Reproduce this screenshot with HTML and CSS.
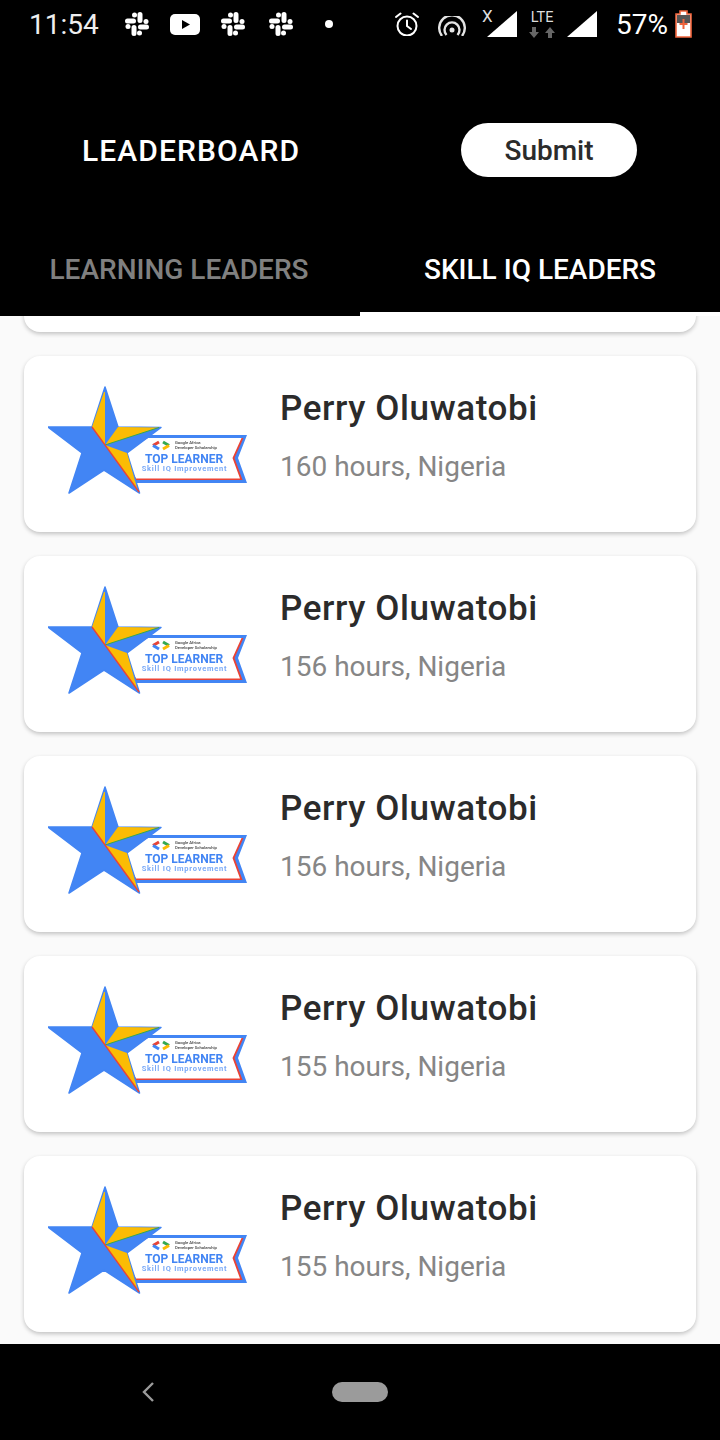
FILE: index.html
```html
<!DOCTYPE html>
<html lang="en">

<head>
    <meta charset="UTF-8">
    <meta name="viewport" content="width=device-width, initial-scale=1.0">
    <title>Leaderboard</title>
    <link rel="stylesheet" href="styles.css">
</head>

<body>

    <!-- Shared icons -->
    <svg class="icon-defs" width="0" height="0">
        <defs>
            <symbol id="slack" viewBox="0 0 24 24">
                <g fill="none" stroke="#fff" stroke-width="5" stroke-linecap="round">
                    <path d="M2.5 9H8.5M15 2.5V8.5M15.5 15H21.5M9 15.5V21.5"/>
                </g>
                <g fill="#fff">
                    <circle cx="9.5" cy="3" r="2.5"/>
                    <circle cx="21" cy="9.5" r="2.5"/>
                    <circle cx="14.5" cy="21" r="2.5"/>
                    <circle cx="3" cy="14.5" r="2.5"/>
                </g>
            </symbol>

            <symbol id="signal" viewBox="0 0 30 26">
                <path d="M0 26L30 0V26Z" fill="#fff"/>
            </symbol>

            <symbol id="badge" viewBox="0 0 200 108">
                <!-- ribbon, left end sits behind the star -->
                <path d="M100 49H199L190 72L199 97H88L75 67Z" fill="#4285f4"/>
                <path d="M100 52H195.500L186.500 72L194.500 94H88L75 67Z" fill="#ea4335"/>
                <path d="M100 52H193.500L184.500 72L192 92.500H88L75 67Z" fill="#fff"/>
                <!-- logo chevrons -->
                <g fill="none" stroke-width="3">
                    <path d="M111 56L105 59.500" stroke="#ea4335"/>
                    <path d="M105 59.500L111 63" stroke="#4285f4"/>
                    <path d="M115 56L121 59.500" stroke="#34a853"/>
                    <path d="M121 59.500L115 63" stroke="#fbbc04"/>
                </g>
                <text class="badge-small" x="127" y="57.500">Google Africa</text>
                <text class="badge-small" x="127" y="62.800">Developer Scholarship</text>
                <text class="badge-title" x="136" y="77">TOP LEARNER</text>
                <text class="badge-sub" x="136.500" y="84.500">Skill IQ Improvement</text>
                <!-- star -->
                <path d="M57 1L70 41L113 41.500L79 67L91.500 107L56 84L21 107L34 67L0 41L44 41Z" fill="#4285f4" stroke="#4285f4" stroke-width="1.500" stroke-linejoin="round"/>
                <path d="M56 6L44 41L57 59V6Z" fill="#fbbc04"/>
                <path d="M57 59L70 41L111 41.500Z" fill="#fbbc04"/>
                <path d="M57 59L79 67L90 105Z" fill="#fbbc04"/>
                <path d="M57 59L111 41.500" stroke="#34a853" stroke-width="1" fill="none"/>
                <path d="M44 41L57 59L91 106" stroke="#ea4335" stroke-width="1.300" fill="none"/>
            </symbol>
        </defs>
    </svg>

    <!-- Status Bar -->
    <div class="status-bar">
        <span class="clock">11:54</span>
        <svg class="slack first"><use href="#slack"/></svg>
        <svg class="youtube" viewBox="0 0 30 21">
            <rect width="30" height="21" rx="5" fill="#fff"/>
            <path d="M12 6L20 10.500L12 15Z" fill="#000"/>
        </svg>
        <svg class="slack"><use href="#slack"/></svg>
        <svg class="slack"><use href="#slack"/></svg>
        <span class="status-dot"></span>

        <div class="status-right">
            <svg class="alarm" viewBox="0 0 24 24" fill="none" stroke="#fff" stroke-width="2">
                <circle cx="12" cy="14" r="9.500"/>
                <path d="M12 8.500V14L16 17M1 5L5.500 1.500M23 5L18.500 1.500" stroke-linecap="round"/>
            </svg>
            <svg class="hotspot" viewBox="0 0 28 20" fill="none" stroke="#e4e4e4" stroke-width="2.400">
                <path d="M4 20A12.800 12.800 0 1 1 24 20"/>
                <path d="M8.500 19A7.500 7.500 0 1 1 19.500 19"/>
                <circle cx="14" cy="14" r="2.500" fill="#e4e4e4" stroke="none"/>
            </svg>
            <div class="signal-x">
                <span class="x-mark">X</span>
                <svg class="signal"><use href="#signal"/></svg>
            </div>
            <div class="lte">
                <span class="lte-text">LTE</span>
                <svg class="lte-arrows" viewBox="0 0 26 11" fill="#666">
                    <path d="M3 0H7V5H10L5 11L0 5H3Z"/>
                    <path d="M19 11H23V6H26L21 0L16 6H19Z"/>
                </svg>
            </div>
            <svg class="signal second"><use href="#signal"/></svg>
            <span class="battery-text">57%</span>
            <svg class="battery" viewBox="0 0 17 28">
                <path d="M5 1H12V4H16V27H1V4H5Z" fill="#fff" stroke="#f0643c" stroke-width="1.600"/>
                <path d="M2 5H15V13H2Z" fill="#555"/>
                <path d="M8.500 9V19M4.500 14H12.500" stroke="#f0643c" stroke-width="2"/>
            </svg>
        </div>
    </div>

    <!-- Header -->
    <header class="toolbar">
        <h1>LEADERBOARD</h1>
        <button class="submit-btn">Submit</button>
    </header>

    <!-- Tabs -->
    <div class="tabs">
        <div class="tab">LEARNING LEADERS</div>
        <div class="tab active">SKILL IQ LEADERS</div>
    </div>

    <!-- Leaders list -->
    <main class="leader-list">
        <div class="leader-card scrolled"></div>

        <div class="leader-card">
            <svg class="badge"><use href="#badge"/></svg>
            <div class="leader-info">
                <p class="leader-name">Perry Oluwatobi</p>
                <p class="leader-detail">160 hours, Nigeria</p>
            </div>
        </div>

        <div class="leader-card">
            <svg class="badge"><use href="#badge"/></svg>
            <div class="leader-info">
                <p class="leader-name">Perry Oluwatobi</p>
                <p class="leader-detail">156 hours, Nigeria</p>
            </div>
        </div>

        <div class="leader-card">
            <svg class="badge"><use href="#badge"/></svg>
            <div class="leader-info">
                <p class="leader-name">Perry Oluwatobi</p>
                <p class="leader-detail">156 hours, Nigeria</p>
            </div>
        </div>

        <div class="leader-card">
            <svg class="badge"><use href="#badge"/></svg>
            <div class="leader-info">
                <p class="leader-name">Perry Oluwatobi</p>
                <p class="leader-detail">155 hours, Nigeria</p>
            </div>
        </div>

        <div class="leader-card">
            <svg class="badge"><use href="#badge"/></svg>
            <div class="leader-info">
                <p class="leader-name">Perry Oluwatobi</p>
                <p class="leader-detail">155 hours, Nigeria</p>
            </div>
        </div>
    </main>

    <!-- Navigation Bar -->
    <nav class="nav-bar">
        <svg class="nav-back" viewBox="0 0 12 20" fill="none" stroke="#9b9b9b" stroke-width="2.400">
            <path d="M11 1L2 10L11 19"/>
        </svg>
        <span class="nav-home"></span>
    </nav>

</body>

</html>
```

FILE: styles.css
```css
body {
    font-family: 'Roboto', sans-serif;
    background-color: #000;
    color: #212121;
    margin: 0;
    padding: 0;
    height: 1440px;
    display: flex;
    flex-direction: column;
    overflow: hidden;
}

.icon-defs {
    position: absolute;
}

/* Status bar */
.status-bar {
    height: 48px;
    flex: none;
    display: flex;
    align-items: center;
    padding: 0 28px 0 29px;
    color: #fff;
}

.clock {
    font-size: 28px;
    width: 70px;
    color: #eee;
}

.slack {
    width: 24px;
    height: 24px;
    margin-left: 24px;
}

.slack.first {
    margin-left: 26px;
}

.youtube {
    width: 30px;
    height: 21px;
    margin-left: 21px;
    margin-right: -3px;
}

.status-dot {
    width: 8px;
    height: 8px;
    border-radius: 50%;
    background-color: #fff;
    margin-left: 32px;
}

.status-right {
    margin-left: auto;
    display: flex;
    align-items: center;
}

.alarm {
    width: 24px;
    height: 24px;
}

.hotspot {
    width: 28px;
    height: 20px;
    margin-left: 19px;
    margin-top: 4px;
}

.signal-x {
    width: 35px;
    height: 48px;
    margin-left: 16px;
    position: relative;
}

.x-mark {
    position: absolute;
    left: 0;
    top: 6px;
    font-size: 17px;
    color: #ddd;
}

.signal {
    width: 30px;
    height: 26px;
}

.signal-x .signal {
    position: absolute;
    left: 5px;
    top: 11px;
}

.signal.second {
    margin-left: 12px;
}

.lte {
    width: 26px;
    margin-left: 12px;
    display: flex;
    flex-direction: column;
    align-items: center;
}

.lte-text {
    font-size: 14.500px;
    line-height: 14px;
    color: #ddd;
}

.lte-arrows {
    width: 26px;
    height: 11px;
    margin-top: 2px;
}

.battery-text {
    font-size: 28px;
    margin-left: 19px;
}

.battery {
    width: 17px;
    height: 28px;
    margin-left: 7px;
}

/* Toolbar */
.toolbar {
    flex: none;
    display: flex;
    align-items: center;
    justify-content: space-between;
    padding: 75px 83px 43px 82px;
}

h1 {
    margin: 0;
    color: #fff;
    font-size: 30px;
    font-weight: 500;
    letter-spacing: 1.100px;
}

.submit-btn {
    width: 176px;
    height: 54px;
    border: none;
    border-radius: 27px;
    background-color: #fff;
    color: #2b2b2b;
    font-family: 'Roboto', sans-serif;
    font-size: 28px;
    font-weight: 500;
    padding: 0;
}

/* Tabs */
.tabs {
    flex: none;
    display: flex;
    height: 96px;
}

.tab {
    flex: 0 0 50%;
    display: flex;
    align-items: center;
    justify-content: center;
    color: #808080;
    font-size: 28px;
    font-weight: 500;
    box-sizing: border-box;
    padding: 2px 2px 0 0;
}

.tab.active {
    color: #fff;
    border-bottom: 4px solid #fff;
    padding: 6px 0 0;
}

/* Leaders list */
.leader-list {
    flex: 1;
    min-height: 0;
    overflow: hidden;
    background-color: #fafafa;
    display: flex;
    flex-direction: column;
    gap: 24px;
    padding: 0 24px;
}

.leader-card {
    flex: none;
    height: 176px;
    box-sizing: border-box;
    padding: 30px 24px 0;
    display: flex;
    background-color: white;
    border-radius: 16px;
    box-shadow: 0 2px 4px rgba(0, 0, 0, 0.22);
}

.leader-card.scrolled {
    margin-top: -160px;
}

.badge {
    width: 200px;
    height: 108px;
    flex: none;
    filter: blur(0.4px);
}

.badge-small {
    font-family: 'Roboto', sans-serif;
    font-size: 4.200px;
    font-weight: 500;
    fill: #444;
}

.badge-title {
    font-family: 'Roboto', sans-serif;
    font-size: 12px;
    font-weight: 700;
    fill: #4285f4;
    text-anchor: middle;
}

.badge-sub {
    font-family: 'Roboto', sans-serif;
    font-size: 7.500px;
    font-weight: 700;
    letter-spacing: 0.750px;
    fill: #7baaf7;
    text-anchor: middle;
}

.leader-info {
    margin-left: 32px;
    padding-top: 1px;
}

.leader-name {
    margin: 0;
    font-size: 35px;
    font-weight: 500;
    line-height: 44px;
    letter-spacing: 0.600px;
    color: #2b2b2b;
}

.leader-detail {
    margin: 14px 0 0;
    font-size: 28px;
    line-height: 44px;
    color: #868686;
}

/* Bottom navigation */
.nav-bar {
    flex: none;
    height: 96px;
    position: relative;
    display: flex;
    align-items: center;
    justify-content: center;
}

.nav-back {
    position: absolute;
    left: 142px;
    top: 38px;
    width: 12px;
    height: 20px;
}

.nav-home {
    width: 56px;
    height: 20px;
    border-radius: 10px;
    background-color: #9b9b9b;
}
```
